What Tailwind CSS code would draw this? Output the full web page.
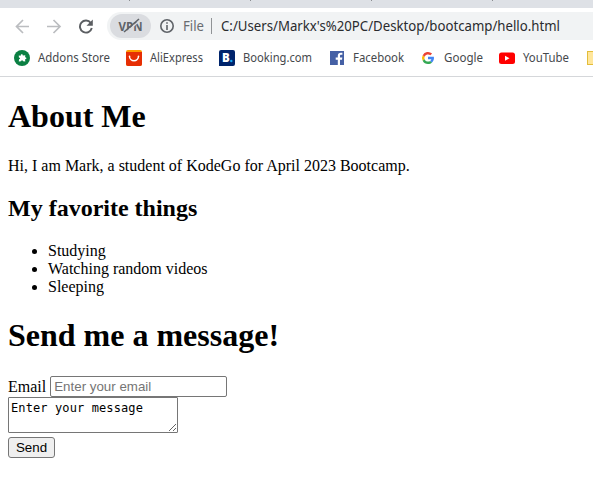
<!DOCTYPE html>
<html lang="en">
<head>
<meta charset="utf-8">
<title>hello.html</title>
<script src="https://cdn.jsdelivr.net/npm/@tailwindcss/browser@4"></script>
</head>
<body class="w-[593px] h-[496px] overflow-hidden bg-white text-black">
<header class="font-['Noto_Sans',sans-serif] border-b border-[#d5d7da] h-[77px] overflow-hidden">
  <div class="h-2 bg-[#dee1e6] flex items-start pl-[129px] gap-[120px]">
    <i class="w-px h-px bg-[#8b8d91] shrink-0"></i><i class="w-px h-px bg-[#8b8d91] shrink-0"></i><i class="w-px h-px bg-[#8b8d91] shrink-0"></i><i class="w-px h-px bg-[#8b8d91] shrink-0"></i>
  </div>
  <div class="flex h-8 pt-1">
    <div class="flex w-[107px] shrink-0 items-center pl-[15px] gap-[17px]">
      <svg class="w-[15px] h-[15px] shrink-0" viewBox="0 0 15 15" fill="none" stroke="#bbbdc0" stroke-width="1.7"><path d="M14 7.500H1.500M8 1 1.500 7.500 8 14"/></svg>
      <svg class="w-[15px] h-[15px] shrink-0" viewBox="0 0 15 15" fill="none" stroke="#bbbdc0" stroke-width="1.7"><path d="M0 7.500h12.500M6.500 1l6.500 6.500L6.500 14"/></svg>
      <svg class="w-[15px] h-[15px] shrink-0" viewBox="0 0 15 15"><path d="M11.800 4A6 6 0 1 0 12.800 9" fill="none" stroke="#5b5e62" stroke-width="1.900"/><path d="M13.800 .5v6.300H7.500z" fill="#5b5e62"/></svg>
    </div>
    <div class="flex flex-1 items-center rounded-l-full bg-[#f1f3f4] h-7 pl-[3px]">
      <div class="w-[41px] h-6 rounded-full bg-[#dadce0] flex items-center justify-center shrink-0">
        <svg class="w-[25px] h-4 overflow-visible" viewBox="0 0 25 16"><text x="0.500" y="12.500" textLength="24" lengthAdjust="spacingAndGlyphs" font-family="Open Sans, sans-serif" font-weight="700" font-size="12" fill="#5f6368">VPN</text><path d="M8 14.500 22.500 2" stroke="#dadce0" stroke-width="1.500"/><path d="M6 14 21 1" stroke="#5f6368" stroke-width="1.600"/></svg>
      </div>
      <svg class="w-[14px] h-[14px] ml-[9px] shrink-0" viewBox="0 0 14 14"><circle cx="7" cy="7" r="6.200" fill="none" stroke="#5f6368" stroke-width="1.600"/><path d="M6.200 3.200h1.600v1.600H6.200zM6.200 6h1.600v5H6.200z" fill="#5f6368"/></svg>
      <svg class="ml-[9px] w-[22px] h-5 shrink-0 overflow-visible"><text x="0" y="15" textLength="21" lengthAdjust="spacingAndGlyphs" font-size="13.500" fill="#696c70">File</text></svg>
      <i class="w-px h-4 ml-1.5 bg-[#909396] shrink-0"></i>
      <svg class="ml-[9px] w-[340px] h-5 shrink-0 overflow-visible"><text x="0" y="15" textLength="339" lengthAdjust="spacingAndGlyphs" font-size="14" fill="#292b2e">C:/Users/Markx's%20PC/Desktop/bootcamp/hello.html</text></svg>
    </div>
  </div>
  <nav class="flex h-9 items-center pl-3.5">
    <div class="flex w-28 shrink-0 items-center gap-2">
      <svg class="w-4 h-4" viewBox="0 0 16 16"><circle cx="8" cy="8" r="8" fill="#0b8043"/><path d="M4.800 5.500 6.800 5.700C6.300 3.900 9 3.700 8.800 5.400L11.300 5.200 11.100 7.200C12.900 7.200 12.800 9.500 11 9.200L11.300 11.500 9 11.300C8.900 9.900 7.200 9.900 7.100 11.300L4.800 11.500 5 9.300C6.400 9.200 6.400 7.700 4.900 7.600z" fill="#fff"/></svg>
      <svg class="w-[72px] h-[18px] overflow-visible"><text x="0" y="13" textLength="72" lengthAdjust="spacingAndGlyphs" font-size="12.500" fill="#45484c">Addons Store</text></svg>
    </div>
    <div class="flex w-[93px] shrink-0 items-center gap-2">
      <svg class="w-4 h-4" viewBox="0 0 16 16"><rect width="16" height="16" rx="2" fill="#ff9a00"/><path d="M0 2h16v12a2 2 0 0 1-2 2H2a2 2 0 0 1-2-2z" fill="#e62e04"/><path d="M3.500 6.300a4.500 4.500 0 0 0 9 0" fill="none" stroke="#fff" stroke-width="1.400"/><circle cx="3.500" cy="6.200" r=".8" fill="#fff"/><circle cx="12.500" cy="6.200" r=".8" fill="#fff"/></svg>
      <svg class="w-[53px] h-[18px] overflow-visible"><text x="0" y="13" textLength="53" lengthAdjust="spacingAndGlyphs" font-size="12.500" fill="#45484c">AliExpress</text></svg>
    </div>
    <div class="flex w-[111px] shrink-0 items-center gap-2">
      <svg class="w-4 h-4" viewBox="0 0 16 16"><path d="M2 0h12a2 2 0 0 1 2 2v12a2 2 0 0 1-2 2H0V2a2 2 0 0 1 2-2z" fill="#00246c"/><text x="3" y="12" font-family="Open Sans, sans-serif" font-weight="800" font-size="11.500" fill="#fff">B</text><circle cx="12.300" cy="11" r="1.200" fill="#14aaf5"/></svg>
      <svg class="w-[69px] h-[18px] overflow-visible"><text x="0" y="13" textLength="69" lengthAdjust="spacingAndGlyphs" font-size="12.500" fill="#45484c">Booking.com</text></svg>
    </div>
    <div class="flex w-[92px] shrink-0 items-center gap-[9px]">
      <svg class="w-[14px] h-[14px]" viewBox="0 0 14 14"><path d="M0 0h14v14H0z" fill="#4560a5"/><path d="M7.800 14V8.700H5.700V6.500h2.100V5c0-2.100 1.200-3.200 3.100-3.200h1.500v2h-1.200c-.9 0-1.200.5-1.200 1.300v1.400h2.300l-.3 2.200h-2V14z" fill="#fff"/></svg>
      <svg class="w-[51px] h-[18px] overflow-visible"><text x="0" y="13" textLength="51" lengthAdjust="spacingAndGlyphs" font-size="12.500" fill="#45484c">Facebook</text></svg>
    </div>
    <div class="flex w-[77px] shrink-0 items-center gap-2.5">
      <svg class="w-3 h-3 overflow-visible" viewBox="4 4 40 40"><path fill="#fbbc05" d="m6.200 33 6.500-5a12 12 0 0 1 .2-8.500l-6.600-4.800A20 20 0 0 0 6.200 33z"/><path fill="#ea4335" d="m6.300 14.700 6.600 4.800A12 12 0 0 1 32 15l5.600-5.600A20 20 0 0 0 6.300 14.700z"/><path fill="#34a853" d="M24 44c5.200 0 9.900-2 13.400-5.200l-6.200-5.200A12 12 0 0 1 12.700 28l-6.500 5A20 20 0 0 0 24 44z"/><path fill="#4285f4" d="M43.600 20H24v8h11.300a12 12 0 0 1-4.100 5.600l6.200 5.200C41 35.500 45.200 29 43.600 20z"/></svg>
      <svg class="w-[39px] h-[18px] overflow-visible"><text x="0" y="13" textLength="39" lengthAdjust="spacingAndGlyphs" font-size="12.500" fill="#45484c">Google</text></svg>
    </div>
    <div class="flex w-[88px] shrink-0 items-center gap-2">
      <svg class="w-4 h-4" viewBox="0 0 16 16"><rect y="2.500" width="16" height="11.500" rx="2.500" fill="#f00"/><path d="M6 5.700 10.500 8.200 6 10.700z" fill="#fff"/></svg>
      <svg class="w-[46px] h-[18px] overflow-visible"><text x="0" y="13" textLength="46" lengthAdjust="spacingAndGlyphs" font-size="12.500" fill="#45484c">YouTube</text></svg>
    </div>
    <i class="w-4 h-3.5 shrink-0 border border-[#e3bd3a] bg-[#ffe69b]"></i>
  </nav>
</header>
<main class="font-['Liberation_Serif',serif] text-[16px] leading-[18px] px-2 pt-[21px]">
  <h1 class="text-[32px] leading-[37px] font-bold">About Me</h1>
  <p class="mt-[22px]">Hi, I am Mark, a student of KodeGo for April 2023 Bootcamp.</p>
  <h2 class="mt-5 text-[24px] leading-[27px] font-bold">My favorite things</h2>
  <ul class="mt-5 pl-10 list-disc">
    <li>Studying</li>
    <li>Watching random videos</li>
    <li>Sleeping</li>
  </ul>
  <h1 class="mt-[21px] text-[32px] leading-[37px] font-bold">Send me a message!</h1>
  <form class="mt-[22px] flex flex-col items-start">
    <div class="flex items-center gap-1 h-[21px]"><label for="email">Email</label><input id="email" type="email" placeholder="Enter your email" class="w-[177px] h-[21px] border border-[#767676] rounded-[2px] px-[3px] font-['Liberation_Sans',sans-serif] text-[13.333px] leading-[15px] placeholder:text-[#757575]"></div>
    <textarea class="w-[170px] h-9 border border-[#767676] rounded-[1px] px-0.5 pt-[3px] font-['DejaVu_Sans_Mono',monospace] text-[12px] tracking-[0.11px] leading-[15px] resize overflow-auto">Enter your message</textarea>
    <button type="button" class="mt-1 w-[47px] h-[21px] border border-[#767676] rounded-[3px] bg-[#efefef] font-['Liberation_Sans',sans-serif] text-[13.333px] leading-[15px]">Send</button>
  </form>
</main>
</body>
</html>
